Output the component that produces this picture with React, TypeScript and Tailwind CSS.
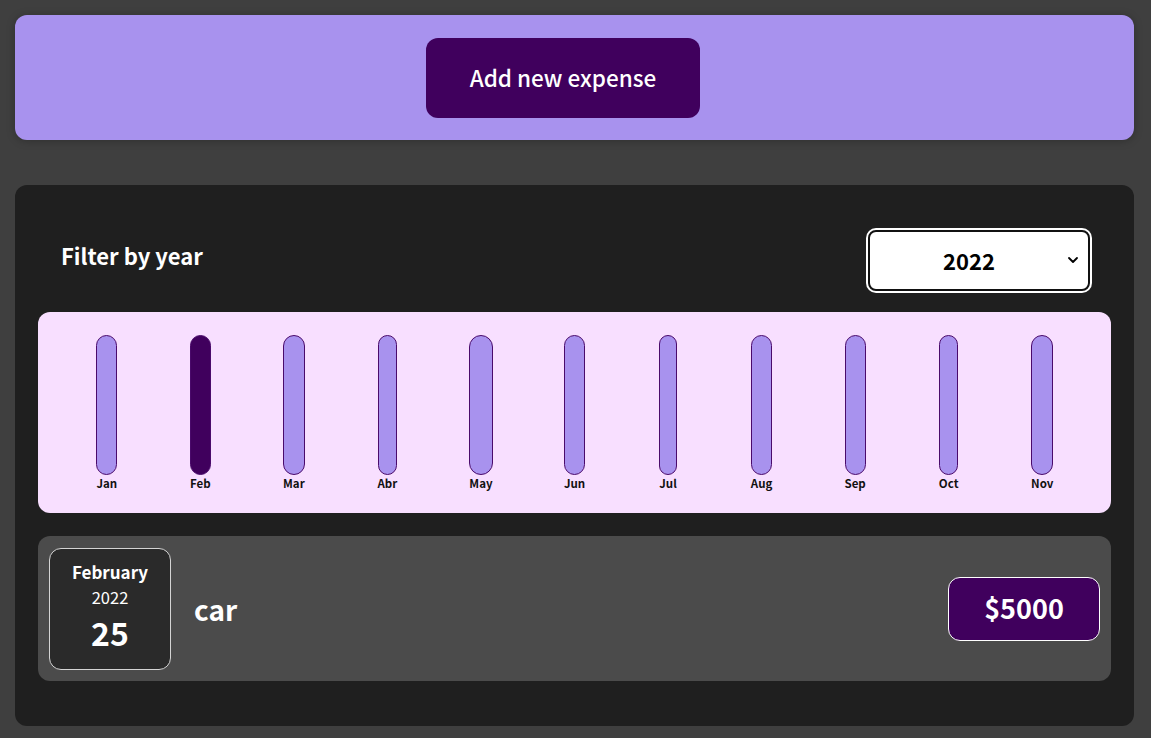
import { ChevronDown } from "lucide-react";

const months = [
  { label: "Jan", active: false },
  { label: "Feb", active: true },
  { label: "Mar", active: false },
  { label: "Abr", active: false },
  { label: "May", active: false },
  { label: "Jun", active: false },
  { label: "Jul", active: false },
  { label: "Aug", active: false },
  { label: "Sep", active: false },
  { label: "Oct", active: false },
  { label: "Nov", active: false },
];

function ChartBar({ label, active }: { label: string; active: boolean }) {
  return (
    <div className="flex flex-col items-center">
      <div className="inline-flex flex-col items-stretch">
        <div
          className={
            active
              ? "h-[140px] rounded-full border border-[#4a0a6b] bg-[#40005d]"
              : "h-[140px] rounded-full border border-[#4a0a6b] bg-[#a892ee]"
          }
        />
        <span className="text-center text-[11.5px] font-bold leading-[16px] text-[#111]">
          {label}
        </span>
      </div>
    </div>
  );
}

function ExpensesFilter() {
  return (
    <div className="flex h-[61px] items-center justify-between pl-[23px] pr-[21px]">
      <label className="mb-[10px] text-[22px] font-bold text-white">Filter by year</label>
      <div className="relative">
        <select
          defaultValue="2022"
          className="h-[61px] w-[222px] appearance-none rounded-[8px] border-2 border-[#111] bg-white pr-[20px] text-center text-[22px] font-bold text-black ring-2 ring-white"
        >
          <option value="2022">2022</option>
          <option value="2021">2021</option>
          <option value="2020">2020</option>
          <option value="2019">2019</option>
        </select>
        <ChevronDown
          className="pointer-events-none absolute right-[9px] top-[22px] h-[16px] w-[16px] text-black"
          strokeWidth={2.75}
        />
      </div>
    </div>
  );
}

function ExpenseItem() {
  return (
    <div className="flex h-[145px] items-center rounded-[12px] bg-[#4b4b4b] px-[11px]">
      <div className="flex h-[122px] w-[122px] flex-col items-center justify-center rounded-[12px] border border-[#d4d4d4] bg-[#2a2a2a] pb-[4px] text-white">
        <div className="text-[17px] font-bold leading-[24px]">February</div>
        <div className="text-[16.5px] leading-[26px]">2022</div>
        <div className="text-[32px] font-bold leading-[44px]">25</div>
      </div>
      <h2 className="ml-[23px] flex-1 text-[28px] font-bold text-white">car</h2>
      <div className="flex h-[64px] w-[152px] items-center justify-center rounded-[12px] border border-white bg-[#40005d] text-[27px] font-bold text-white">
        $5000
      </div>
    </div>
  );
}

export default function App() {
  return (
    <div className="min-h-screen bg-[#3f3f3f] pb-[12px] pl-[15px] pr-[17px] pt-[15px] font-['Noto_Sans_CJK_JP',sans-serif]">
      <div className="flex h-[125px] items-center rounded-[12px] bg-[#a892ee] pl-[411px] shadow-[0_1px_8px_rgba(0,0,0,0.25)]">
        <button className="h-[80px] w-[274px] rounded-[12px] bg-[#40005d] text-[22.5px] font-medium text-white">
          Add new expense
        </button>
      </div>
      <div className="mt-[45px] rounded-[12px] bg-[#1f1f1f] px-[23px] pb-[45px] pt-[45px]">
        <ExpensesFilter />
        <div className="mt-[21px] grid h-[201px] grid-cols-11 rounded-[12px] bg-[#f8dfff] px-[22px] pt-[23px]">
          {months.map((m) => (
            <ChartBar key={m.label} label={m.label} active={m.active} />
          ))}
        </div>
        <div className="mt-[23px]">
          <ExpenseItem />
        </div>
      </div>
    </div>
  );
}
